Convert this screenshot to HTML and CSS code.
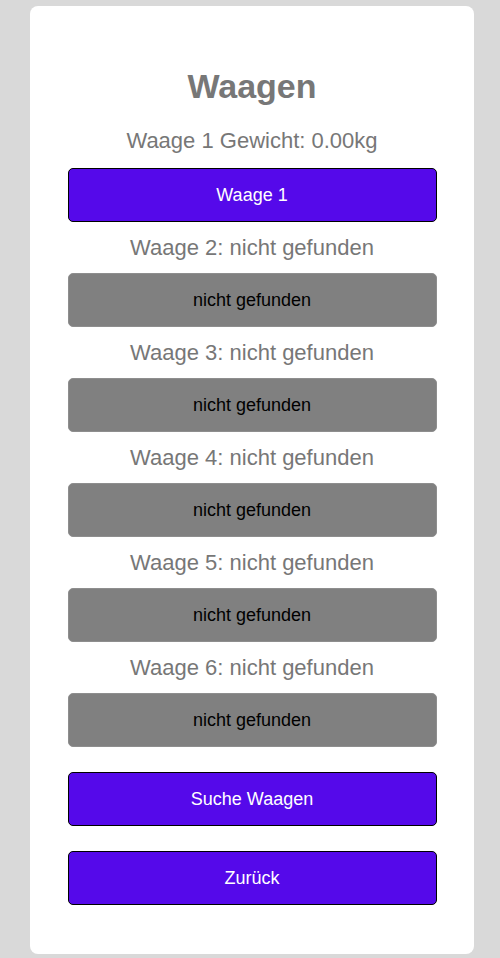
FILE: index.html
```html
<!DOCTYPE html>
<html lang="de">
<head>
    <meta charset="UTF-8">
    <meta name="viewport" content="width=device-width, initial-scale=1.0">
    <title>Waagen</title>
    <link rel="stylesheet" href="styles.css">
</head>
<body>
    <div class="container">
        <h1>Waagen</h1>

        <p class="scale-label">Waage 1 Gewicht: 0.00kg</p>
        <button class="btn btn-active">Waage 1</button>

        <p class="scale-label">Waage 2: nicht gefunden</p>
        <button class="btn btn-missing">nicht gefunden</button>

        <p class="scale-label">Waage 3: nicht gefunden</p>
        <button class="btn btn-missing">nicht gefunden</button>

        <p class="scale-label">Waage 4: nicht gefunden</p>
        <button class="btn btn-missing">nicht gefunden</button>

        <p class="scale-label">Waage 5: nicht gefunden</p>
        <button class="btn btn-missing">nicht gefunden</button>

        <p class="scale-label">Waage 6: nicht gefunden</p>
        <button class="btn btn-missing">nicht gefunden</button>

        <div class="actions">
            <button class="btn btn-active">Suche Waagen</button>
            <button class="btn btn-active">Zurück</button>
        </div>
    </div>
</body>
</html>
```

FILE: styles.css
```css
body {
    font-family: "Liberation Sans", Arial, sans-serif;
    margin: 0;
    background-color: #d9d9d9;
    color: #777777;
}
.container {
    width: 444px;
    box-sizing: border-box;
    margin: 6px 26px 5px 30px;
    padding: 61px 0 49px;
    background-color: #ffffff;
    border-radius: 8px;
    text-align: center;
}
h1 {
    font-size: 34px;
    font-weight: bold;
    margin: 0 0 22px;
    color: #777777;
}
.scale-label {
    font-size: 22px;
    margin: 13px 0 12px;
}
h1 + .scale-label {
    margin-top: 0;
    margin-bottom: 14px;
}
.btn {
    display: block;
    width: 369px;
    height: 54px;
    margin: 0 auto;
    font-family: "Liberation Sans", Arial, sans-serif;
    font-size: 18px;
    border-radius: 5px;
    box-sizing: border-box;
}
.btn-active {
    background-color: #5509ea;
    color: #ffffff;
    border: 1px solid #000000;
}
.btn-missing {
    background-color: #808080;
    color: #000000;
    border: 1px solid #8e8e8e;
}
.actions .btn {
    margin-top: 25px;
}
```
